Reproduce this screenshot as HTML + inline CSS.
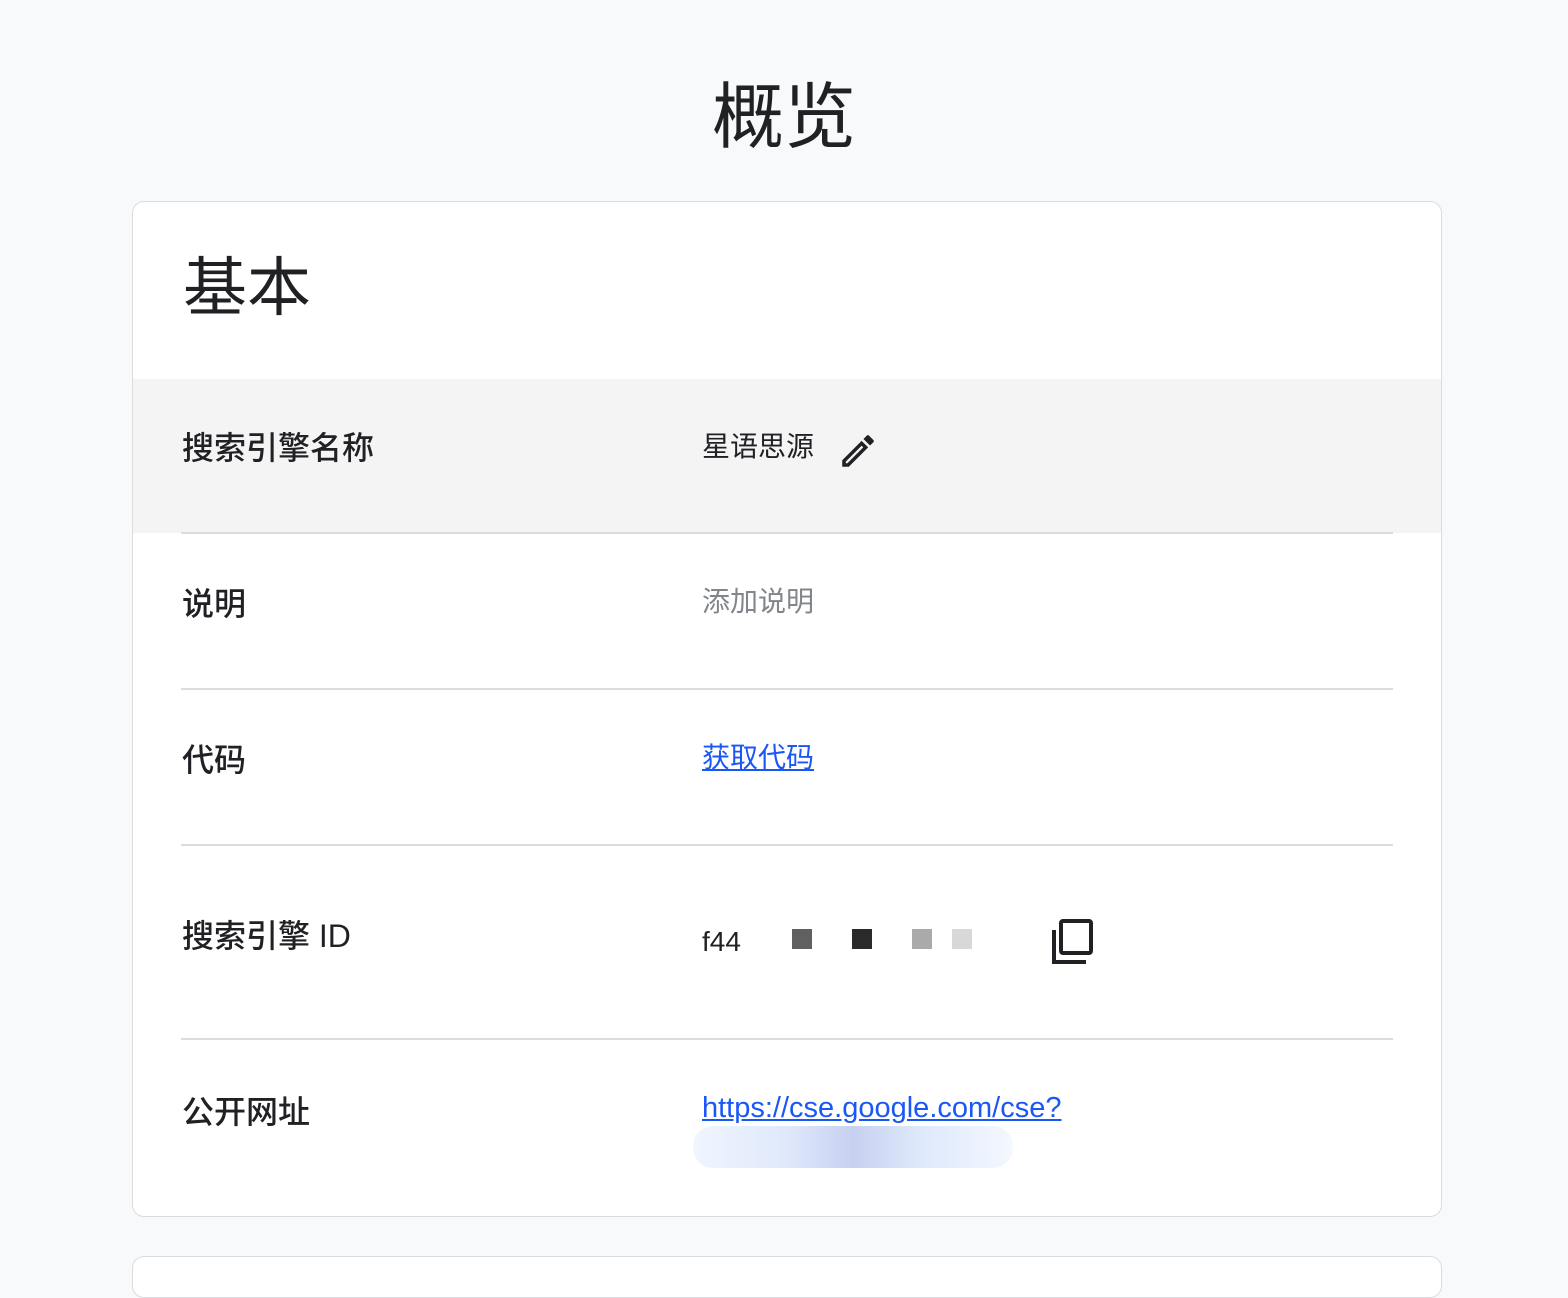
<!DOCTYPE html>
<html><head><meta charset="utf-8"><style>
body{margin:0;background:#f8f9fa;font-family:"Liberation Sans","Noto Sans CJK SC",sans-serif;color:#202124;width:1568px;height:1264px;overflow:hidden;position:relative}
.t{position:absolute;left:0;width:1568px;top:76px;text-align:center;font-size:72px;line-height:84px}
.card{position:absolute;left:132px;top:201px;width:1308px;height:1014px;background:#fff;border:1px solid #dadce0;border-radius:12px;overflow:hidden}
.card2{position:absolute;left:132px;top:1256px;width:1308px;height:40px;background:#fff;border:1px solid #dadce0;border-radius:12px}
.h{position:absolute;left:50px;top:50px;font-size:64px;line-height:72px}
.row{position:absolute;left:0;width:1308px}
.lab{position:absolute;left:49px;font-size:32px;font-weight:500;line-height:40px}
.val{position:absolute;left:569px;font-size:28px;line-height:36px}
.line{position:absolute;left:48px;width:1212px;height:2px;background:#dadce0}
a{color:#1a57f5;text-decoration:underline}
.px{position:absolute;width:20px;height:20px}
</style></head><body>
<div class="t">概览</div>
<div class="card">
<div class="h">基本</div>
<div class="row" style="top:177px;height:154px;background:#f4f4f4"></div>
<div class="lab" style="top:226px">搜索引擎名称</div>
<div class="val" style="top:227px">星语思源</div>
<svg style="position:absolute;left:704px;top:228px" width="42" height="42" viewBox="0 0 24 24"><path d="M3 17.25V21h3.75L17.81 9.94l-3.75-3.75L3 17.25zM5.92 19H5v-.92l9.06-9.06.92.92L5.92 19zM20.71 5.63l-2.34-2.34a1 1 0 0 0-1.41 0l-1.83 1.83 3.75 3.75 1.83-1.83a1 1 0 0 0 0-1.41z" fill="#202124"/></svg>
<div class="line" style="top:330px"></div>
<div class="lab" style="top:382px">说明</div>
<div class="val" style="top:382px;color:#80868b">添加说明</div>
<div class="line" style="top:486px"></div>
<div class="lab" style="top:538px">代码</div>
<div class="val" style="top:538px"><a>获取代码</a></div>
<div class="line" style="top:642px"></div>
<div class="lab" style="top:714px">搜索引擎 ID</div>
<div class="val" style="top:722px">f44</div>
<div class="px" style="left:659px;top:727px;background:#606060"></div>
<div class="px" style="left:719px;top:727px;background:#2a2a2a"></div>
<div class="px" style="left:779px;top:727px;background:#aaa"></div>
<div class="px" style="left:819px;top:727px;background:#d8d8d8"></div>
<svg style="position:absolute;left:918px;top:716px" width="44" height="48" viewBox="0 0 44 48"><path d="M3 12v32h32" fill="none" stroke="#202124" stroke-width="4"/><rect x="10" y="3" width="30" height="32" rx="2" fill="none" stroke="#202124" stroke-width="4"/></svg>
<div class="line" style="top:836px"></div>
<div class="lab" style="top:890px">公开网址</div>
<div class="val" style="top:888px;font-size:29px"><a>https://cse.google.com/cse?</a></div>
<div style="position:absolute;left:560px;top:924px;width:320px;height:42px;border-radius:20px;background:linear-gradient(90deg,#f0f6ff,#dfe8fb 30%,#c7d0f0 50%,#dde8fb 70%,#f4f8ff)"></div>
</div>
<div class="card2"></div>
</body></html>
